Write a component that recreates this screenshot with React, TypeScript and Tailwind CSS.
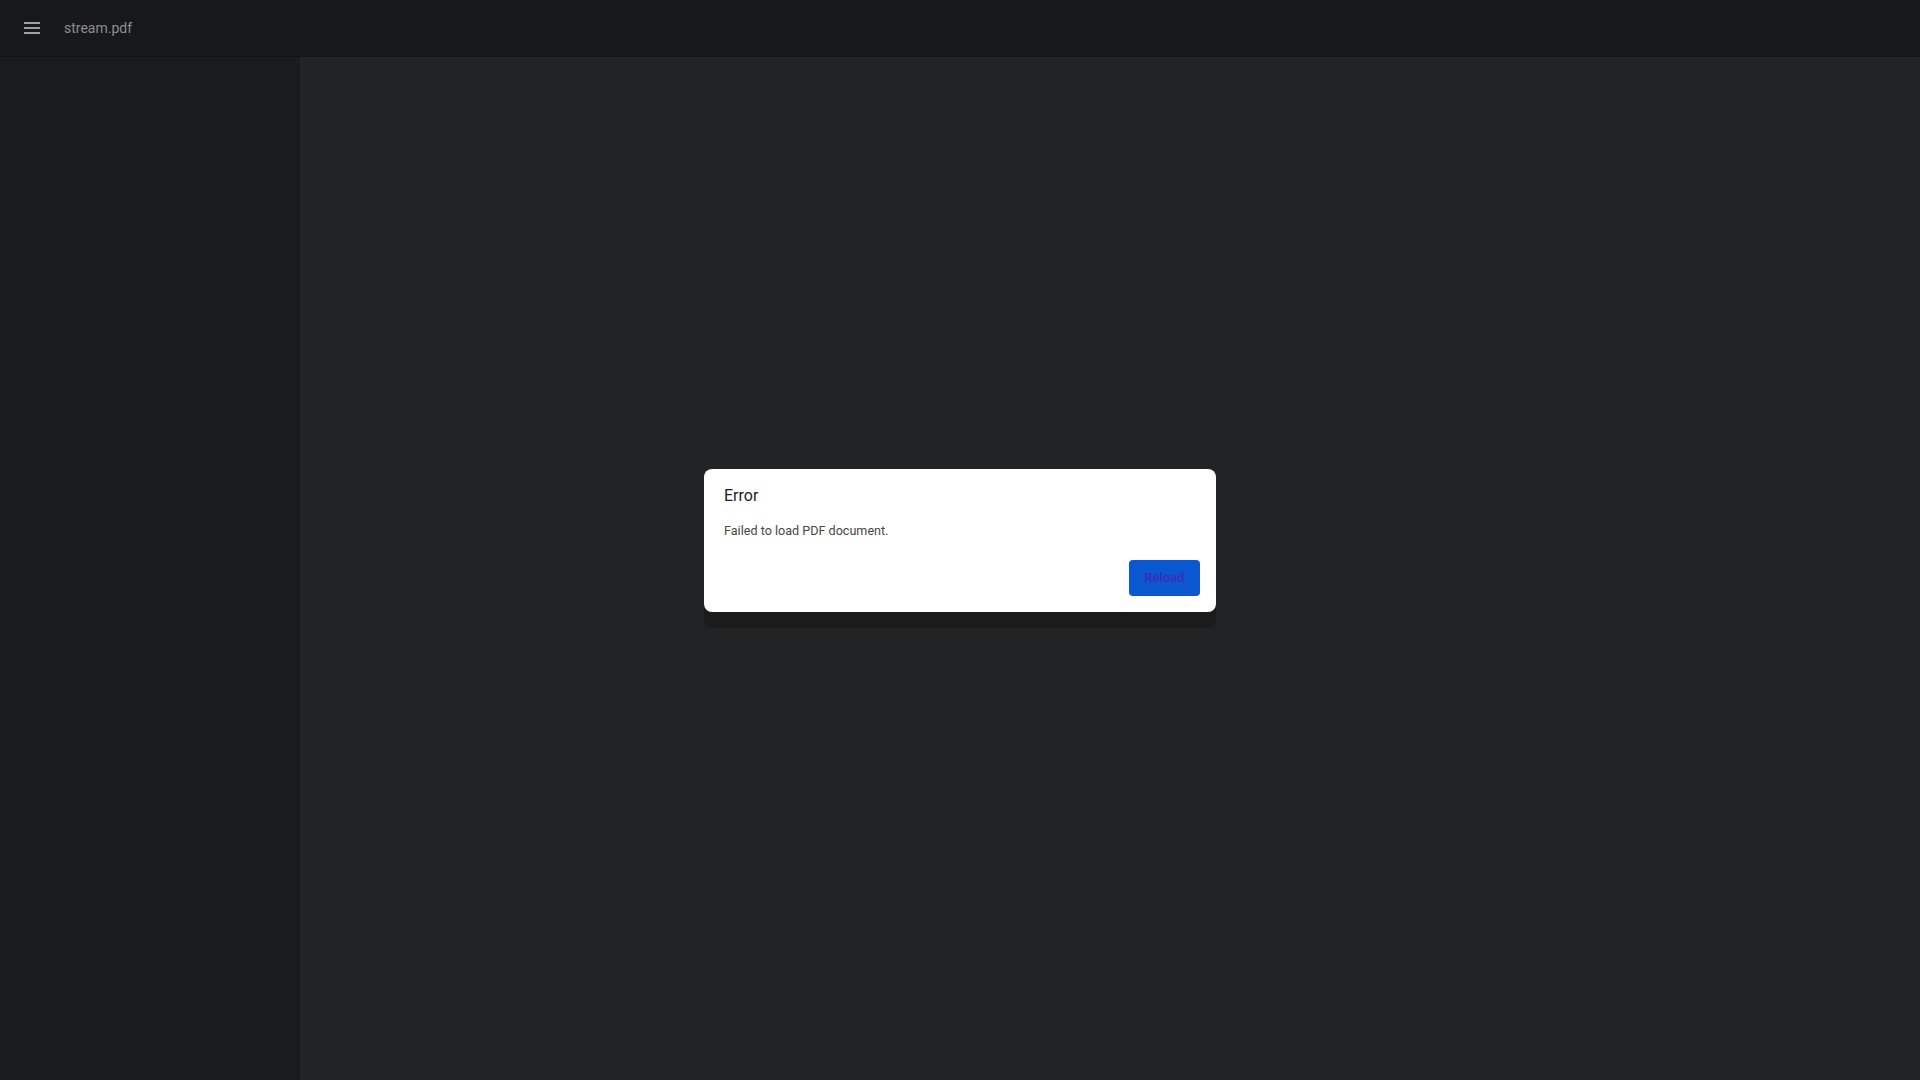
import React from "react";

const MenuIcon = () => (
  <svg width="16" height="14" viewBox="0 0 16 14" className="block">
    <rect x="0" y="1" width="16" height="2" fill="#9aa0a6" />
    <rect x="0" y="6" width="16" height="2" fill="#9aa0a6" />
    <rect x="0" y="11" width="16" height="2" fill="#9aa0a6" />
  </svg>
);

const ErrorDialog = () => {
  return (
    <div className="fixed inset-0 flex items-start justify-center pt-[469px]">
      <div className="w-[512px] rounded-lg bg-[#1b1b1c] pb-4">
        <div className="rounded-lg bg-white pt-[15px] pb-4">
          <div className="px-5 text-[16px] leading-6 text-[#202124]">Error</div>
          <div className="mt-[13px] px-5 text-[12.6px] leading-5 text-[#474747]">
            Failed to load PDF document.
          </div>
          <div className="mt-[19px] flex justify-end pr-4">
            <button className="h-9 w-[71px] rounded bg-[#0b57d0] text-[13px] font-medium text-[#3f2db8]">
              Reload
            </button>
          </div>
        </div>
      </div>
    </div>
  );
};

export default function App() {
  return (
    <div
      className="flex h-screen w-full flex-col overflow-hidden bg-[#222325]"
      style={{ fontFamily: "Roboto, 'Liberation Sans', sans-serif" }}
    >
      <header className="flex h-[57px] shrink-0 items-center border-b border-[#131416] bg-[#17181a] pl-6">
        <MenuIcon />
        <span className="ml-6 text-[14px] text-[#8e8f91]">stream.pdf</span>
      </header>
      <div className="flex flex-1">
        <aside className="w-[300px] shrink-0 bg-[#1a1b1d]" />
        <main className="flex-1 bg-[#222325]" />
      </div>
      <ErrorDialog />
    </div>
  );
}
